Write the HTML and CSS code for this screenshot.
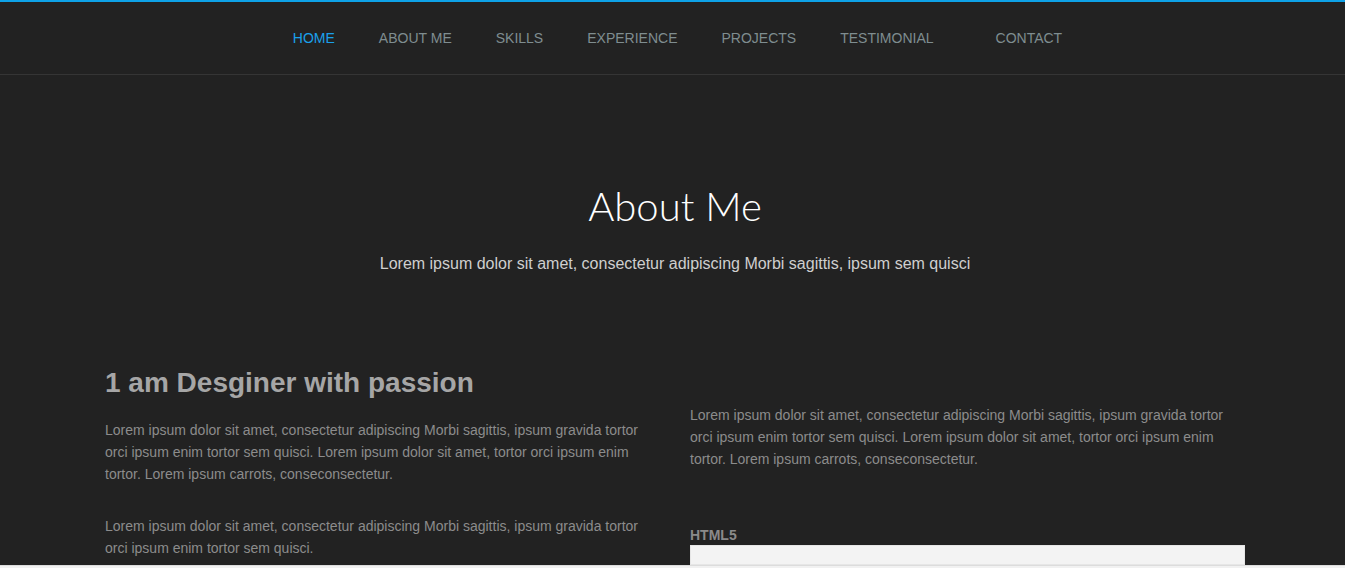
FILE: index.html
```html
<!DOCTYPE html>
<html lang="en">
<head>
<meta charset="utf-8">
<title>About Me</title>
<link rel="stylesheet" href="styles.css">
</head>
<body>
<header class="topbar">
  <nav class="nav">
    <a class="nav-link active" href="#">HOME</a>
    <a class="nav-link" href="#">ABOUT ME</a>
    <a class="nav-link" href="#">SKILLS</a>
    <a class="nav-link" href="#">EXPERIENCE</a>
    <a class="nav-link" href="#">PROJECTS</a>
    <a class="nav-link" href="#">TESTIMONIAL</a>
    <a class="nav-link nav-link-last" href="#">CONTACT</a>
  </nav>
</header>
<main class="about">
  <div class="container">
    <h1 class="about-title">About Me</h1>
    <p class="about-sub">Lorem ipsum dolor sit amet, consectetur adipiscing Morbi sagittis, ipsum sem quisci</p>
    <div class="row">
      <div class="col col-left">
        <h2 class="col-heading">1 am Desginer with passion</h2>
        <p class="text">Lorem ipsum dolor sit amet, consectetur adipiscing Morbi sagittis, ipsum gravida tortor orci ipsum enim tortor sem quisci. Lorem ipsum dolor sit amet, tortor orci ipsum enim tortor. Lorem ipsum carrots, conseconsectetur.</p>
        <p class="text">Lorem ipsum dolor sit amet, consectetur adipiscing Morbi sagittis, ipsum gravida tortor orci ipsum enim tortor sem quisci.</p>
      </div>
      <div class="col col-right">
        <p class="text">Lorem ipsum dolor sit amet, consectetur adipiscing Morbi sagittis, ipsum gravida tortor orci ipsum enim tortor sem quisci. Lorem ipsum dolor sit amet, tortor orci ipsum enim tortor. Lorem ipsum carrots, conseconsectetur.</p>
        <div class="skill">
          <div class="skill-label">HTML5</div>
          <div class="skill-bar"></div>
        </div>
      </div>
    </div>
  </div>
</main>
<div class="bottom-strip"></div>
</body>
</html>
```
FILE: styles.css
```css
* { box-sizing: border-box; }
html, body { margin: 0; padding: 0; }
body {
  background: #222222;
  font-family: "Liberation Sans", Arial, sans-serif;
  color: #8c8c8c;
}
.topbar {
  border-top: 2px solid #0ea2e8;
  border-bottom: 1px solid #353535;
  padding-left: 10px;
}
.nav {
  display: flex;
  justify-content: center;
  height: 72px;
  align-items: center;
}
.nav-link {
  font-size: 14px;
  color: #7f8d90;
  text-decoration: none;
  padding: 0 22px;
  line-height: 72px;
}
.nav-link.active { color: #1aa0ea; }
.nav-link-last { margin-left: 18px; }

.about { padding: 107px 0 0 5px; }
.container {
  width: 1140px;
  margin: 0 auto;
}
.about-title {
  margin: 0;
  text-align: center;
  font-family: "Lato", "Open Sans", sans-serif;
  font-weight: 300;
  font-size: 40px;
  line-height: 48px;
  color: #ffffff;
}
.about-sub {
  margin: 23px 0 0;
  text-align: center;
  font-size: 16px;
  line-height: 22px;
  color: #cfcfcf;
}
.row {
  display: flex;
  gap: 30px;
  margin-top: 90px;
}
.col { flex: 1 1 0; min-width: 0; }
.col-heading {
  margin: 0 0 18px;
  font-size: 28px;
  line-height: 36px;
  font-weight: bold;
  color: #a6a6a6;
}
.text {
  margin: 0 0 30px;
  font-size: 14px;
  line-height: 22px;
  color: #8c8c8c;
}
.col-right { padding-top: 39px; }
.col-right .text { margin-bottom: 56px; }
.skill-label {
  font-size: 14px;
  font-weight: bold;
  line-height: 18px;
  color: #8a8a8a;
  margin-bottom: 1px;
}
.skill-bar {
  height: 20px;
  background: #f3f3f3;
  border: 1px solid #e6e6e6;
}
.bottom-strip {
  position: fixed;
  left: 0;
  right: 0;
  bottom: 0;
  height: 3px;
  background: #f1f1f1;
  border-top: 1px solid #dcdcdc;
}
```
